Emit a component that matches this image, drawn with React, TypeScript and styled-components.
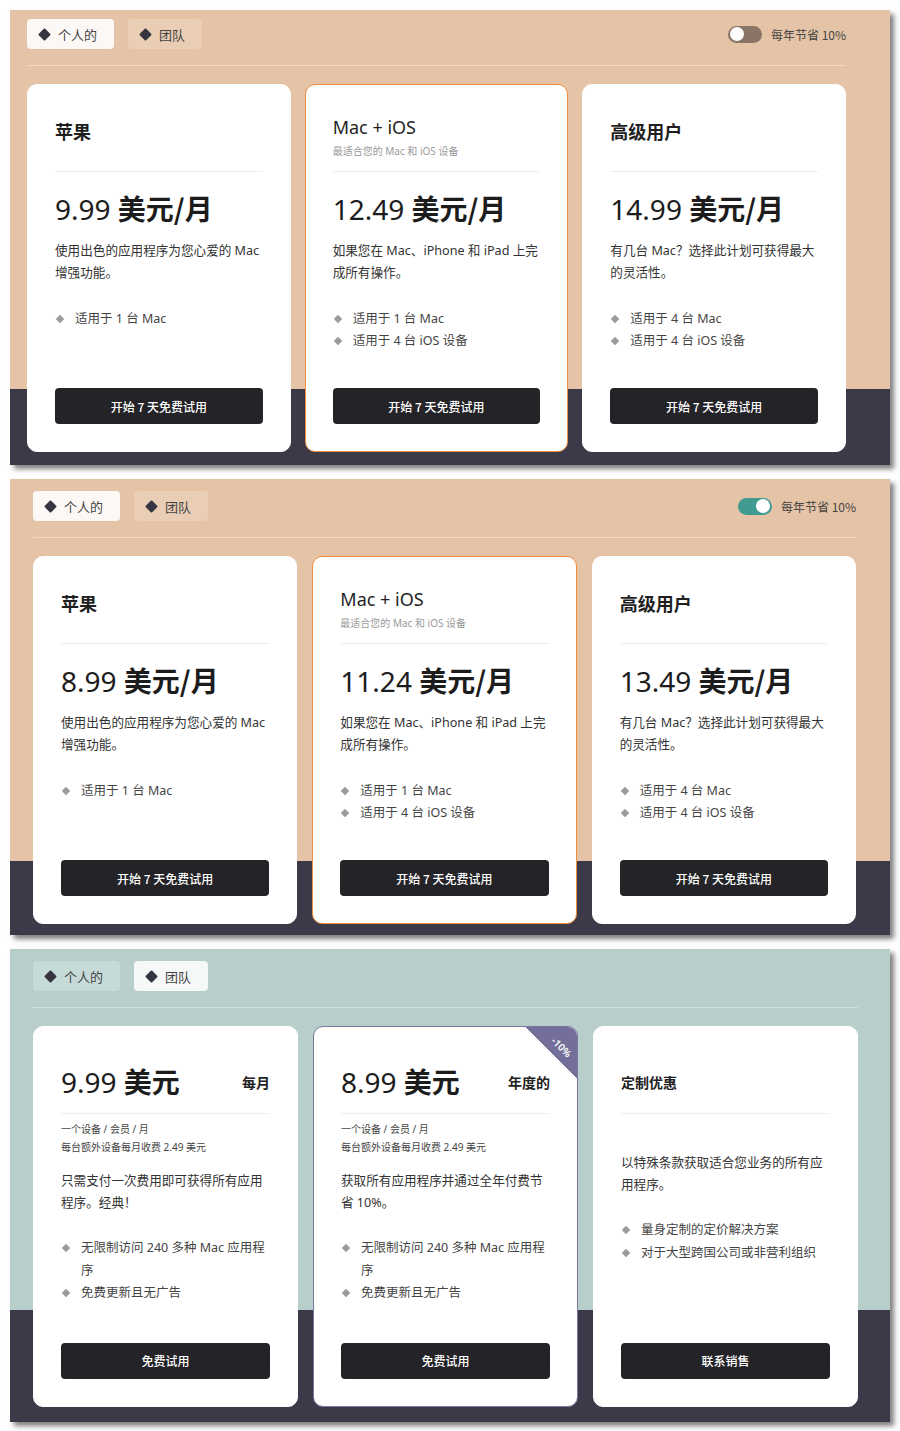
import { createGlobalStyle } from "styled-components";
import styled from "styled-components";

const GlobalStyle = createGlobalStyle`
  * { box-sizing: border-box; }
  body {
    margin: 0;
    background: #ffffff;
    font-family: "Noto Sans", "Noto Sans CJK SC", sans-serif;
    color: #222;
  }
`;

const DARK = "#3c3a48";

const Page = styled.div`
  padding: 10px 10px 11px;
  display: flex;
  flex-direction: column;
  gap: 14px;
`;

const Panel = styled.section<{ $bg: string; $band: number; $pad: string }>`
  padding: ${(p) => p.$pad};
  background: linear-gradient(
    to bottom,
    ${(p) => p.$bg} calc(100% - ${(p) => p.$band}px),
    ${DARK} calc(100% - ${(p) => p.$band}px)
  );
  box-shadow: 4px 4px 5px rgba(0, 0, 0, 0.5);
`;

const TopBar = styled.div`
  display: flex;
  align-items: center;
  justify-content: space-between;
  height: 30px;
`;

const Tabs = styled.div`
  display: flex;
  gap: 14px;
`;

const Tab = styled.div<{ $bg: string }>`
  height: 30px;
  display: flex;
  align-items: center;
  gap: 9px;
  padding: 0 17px 0 13px;
  border-radius: 4px;
  background: ${(p) => p.$bg};
  font-size: 13px;
  color: #444;
  font-family: "Noto Sans CJK SC", sans-serif;
`;

const Diamond = styled.span`
  width: 9px;
  height: 9px;
  background: #36343f;
  transform: rotate(45deg);
  border-radius: 1px;
`;

const Saver = styled.label`
  display: flex;
  align-items: center;
  gap: 9px;
  font-size: 12px;
  color: #444;
  font-family: "Noto Sans CJK SC", sans-serif;
`;

const Switch = styled.span<{ $on: boolean }>`
  position: relative;
  width: 34px;
  height: 17px;
  border-radius: 9px;
  background: ${(p) => (p.$on ? "#409a8f" : "#8a7466")};
  &::after {
    content: "";
    position: absolute;
    top: 1.5px;
    left: ${(p) => (p.$on ? "18px" : "2px")};
    width: 14px;
    height: 14px;
    border-radius: 50%;
    background: #fff;
  }
`;

const Rule = styled.hr<{ $color: string }>`
  margin: 16px 0 18px;
  border: 0;
  height: 1px;
  background: ${(p) => p.$color};
`;

const Cards = styled.div<{ $gap: number }>`
  display: grid;
  grid-template-columns: repeat(3, 1fr);
  gap: ${(p) => p.$gap}px;
`;

const Card = styled.div<{ $border?: string }>`
  position: relative;
  overflow: hidden;
  background: #fff;
  border-radius: 10px;
  border: 1px solid ${(p) => p.$border || "#fff"};
  padding: 27px;
  display: flex;
  flex-direction: column;
`;

// plan header: title (and optional subtitle), fixed height so the dividers line up
const Header = styled.div<{ $pt: number }>`
  height: 60px;
  padding-top: ${(p) => p.$pt}px;
  border-bottom: 1px solid #f0eeea;
  display: flex;
  flex-direction: column;
`;

// team header: price on the left, period on the right
const PriceHeader = styled.div`
  height: 60px;
  padding: 6px 0 10px;
  border-bottom: 1px solid #f0eeea;
  display: flex;
  align-items: center;
  justify-content: space-between;
`;

const Title = styled.h3<{ $weight: number }>`
  margin: 0;
  font-size: 18px;
  line-height: 24px;
  font-weight: ${(p) => p.$weight};
  color: #1f1f1f;
  font-family: "Noto Sans", "Noto Sans CJK SC", sans-serif;
`;

const Subtitle = styled.div`
  margin-top: 4px;
  font-size: 10px;
  line-height: 16px;
  color: #9a9a9a;
  font-family: "Noto Sans", "Noto Sans CJK SC", sans-serif;
`;

const Price = styled.div<{ $mt: number }>`
  margin-top: ${(p) => p.$mt}px;
  font-size: 28px;
  line-height: 36px;
  color: #1c1c1c;
  white-space: nowrap;
  span {
    font-weight: 700;
    font-family: "Noto Sans CJK SC", sans-serif;
  }
`;

const Period = styled.div`
  font-size: 14px;
  font-weight: 700;
  color: #222;
  font-family: "Noto Sans CJK SC", sans-serif;
`;

const Fine = styled.div`
  margin-top: 6px;
  font-size: 10px;
  line-height: 18px;
  color: #444;
  font-family: "Noto Sans", "Noto Sans CJK SC", sans-serif;
`;

const Description = styled.p<{ $mt: number }>`
  margin: ${(p) => p.$mt}px 0 0;
  font-size: 12.6px;
  line-height: 22px;
  color: #333;
  font-family: "Noto Sans", "Noto Sans CJK SC", sans-serif;
`;

const Features = styled.ul<{ $mt: number; $mb: number; $lh: number }>`
  list-style: none;
  margin: ${(p) => p.$mt}px 0 ${(p) => p.$mb}px;
  padding: 0;
  line-height: ${(p) => p.$lh}px;
`;

const Feature = styled.li`
  position: relative;
  padding-left: 20px;
  font-size: 12.5px;
  color: #444;
  font-family: "Noto Sans", "Noto Sans CJK SC", sans-serif;
  &::before {
    content: "";
    position: absolute;
    left: 2px;
    top: 8px;
    width: 6px;
    height: 6px;
    background: #9b9b9b;
    transform: rotate(45deg);
  }
`;

const Button = styled.button`
  margin-top: auto;
  height: 36px;
  width: 100%;
  border: 0;
  border-radius: 4px;
  background: #242328;
  color: #fff;
  font-size: 12px;
  font-weight: 500;
  font-family: "Noto Sans CJK SC", sans-serif;
`;

const Corner = styled.div`
  position: absolute;
  top: 0;
  right: 0;
  width: 52px;
  height: 52px;
  background: linear-gradient(45deg, transparent 50%, #736f9a 50%);
`;

const CornerText = styled.span`
  position: absolute;
  top: 13px;
  right: 4px;
  transform: rotate(45deg);
  color: #fff;
  font-size: 10px;
  font-weight: 600;
`;

type Plan = {
  title: string;
  weight: number;
  sub?: string;
  amount: string;
  desc: string;
  features: string[];
  accent?: string;
};

const plans = (yearly: boolean): Plan[] => [
  {
    title: "苹果",
    weight: 700,
    amount: yearly ? "8.99" : "9.99",
    desc: "使用出色的应用程序为您心爱的 Mac 增强功能。",
    features: ["适用于 1 台 Mac"],
  },
  {
    title: "Mac + iOS",
    weight: 400,
    sub: "最适合您的 Mac 和 iOS 设备",
    amount: yearly ? "11.24" : "12.49",
    desc: "如果您在 Mac、iPhone 和 iPad 上完成所有操作。",
    features: ["适用于 1 台 Mac", "适用于 4 台 iOS 设备"],
    accent: "#f08c3e",
  },
  {
    title: "高级用户",
    weight: 700,
    amount: yearly ? "13.49" : "14.99",
    desc: "有几台 Mac？选择此计划可获得最大的灵活性。",
    features: ["适用于 4 台 Mac", "适用于 4 台 iOS 设备"],
  },
];

function PersonalPanel({ yearly, pad, gap, band }: { yearly: boolean; pad: string; gap: number; band: number }) {
  return (
    <Panel $bg="#e4c3a6" $band={band} $pad={pad}>
      <TopBar>
        <Tabs>
          <Tab $bg="#fcf8f5">
            <Diamond />
            个人的
          </Tab>
          <Tab $bg="#e9cdb4">
            <Diamond />
            团队
          </Tab>
        </Tabs>
        <Saver>
          <Switch $on={yearly} />
          每年节省 10%
        </Saver>
      </TopBar>
      <Rule $color="#efdac8" />
      <Cards $gap={gap}>
        {plans(yearly).map((plan) => (
          <Card key={plan.title} $border={plan.accent}>
            <Header $pt={plan.sub ? 3 : 8}>
              <Title $weight={plan.weight}>{plan.title}</Title>
              {plan.sub && <Subtitle>{plan.sub}</Subtitle>}
            </Header>
            <Price $mt={18}>
              {plan.amount} <span>美元/月</span>
            </Price>
            <Description $mt={13}>{plan.desc}</Description>
            <Features $mt={24} $mb={36} $lh={22}>
              {plan.features.map((f) => (
                <Feature key={f}>{f}</Feature>
              ))}
            </Features>
            <Button>开始 7 天免费试用</Button>
          </Card>
        ))}
      </Cards>
    </Panel>
  );
}

const teamFeatures = ["无限制访问 240 多种 Mac 应用程序", "免费更新且无广告"];

function TeamPanel() {
  return (
    <Panel $bg="#b8cecb" $band={112} $pad="12px 32px 15px 23px">
      <TopBar>
        <Tabs>
          <Tab $bg="#c6dad7">
            <Diamond />
            个人的
          </Tab>
          <Tab $bg="#f4f8f7">
            <Diamond />
            团队
          </Tab>
        </Tabs>
      </TopBar>
      <Rule $color="#d2e1de" />
      <Cards $gap={15}>
        <Card>
          <PriceHeader>
            <Price $mt={0}>
              9.99 <span>美元</span>
            </Price>
            <Period>每月</Period>
          </PriceHeader>
          <Fine>
            一个设备 / 会员 / 月
            <br />
            每台额外设备每月收费 2.49 美元
          </Fine>
          <Description $mt={14}>只需支付一次费用即可获得所有应用程序。经典！</Description>
          <Features $mt={23} $mb={38} $lh={22.5}>
            {teamFeatures.map((f) => (
              <Feature key={f}>{f}</Feature>
            ))}
          </Features>
          <Button>免费试用</Button>
        </Card>
        <Card $border="#7a76a0">
          <Corner>
            <CornerText>-10%</CornerText>
          </Corner>
          <PriceHeader>
            <Price $mt={0}>
              8.99 <span>美元</span>
            </Price>
            <Period>年度的</Period>
          </PriceHeader>
          <Fine>
            一个设备 / 会员 / 月
            <br />
            每台额外设备每月收费 2.49 美元
          </Fine>
          <Description $mt={14}>获取所有应用程序并通过全年付费节省 10%。</Description>
          <Features $mt={23} $mb={38} $lh={22.5}>
            {teamFeatures.map((f) => (
              <Feature key={f}>{f}</Feature>
            ))}
          </Features>
          <Button>免费试用</Button>
        </Card>
        <Card>
          <PriceHeader>
            <Period>定制优惠</Period>
          </PriceHeader>
          <Description $mt={38}>以特殊条款获取适合您业务的所有应用程序。</Description>
          <Features $mt={23} $mb={38} $lh={22.5}>
            <Feature>量身定制的定价解决方案</Feature>
            <Feature>对于大型跨国公司或非营利组织</Feature>
          </Features>
          <Button>联系销售</Button>
        </Card>
      </Cards>
    </Panel>
  );
}

export default function App() {
  return (
    <>
      <GlobalStyle />
      <Page>
        <PersonalPanel yearly={false} pad="9px 44px 13px 17px" gap={14} band={76} />
        <PersonalPanel yearly={true} pad="12px 34px 11px 23px" gap={15} band={74} />
        <TeamPanel />
      </Page>
    </>
  );
}
